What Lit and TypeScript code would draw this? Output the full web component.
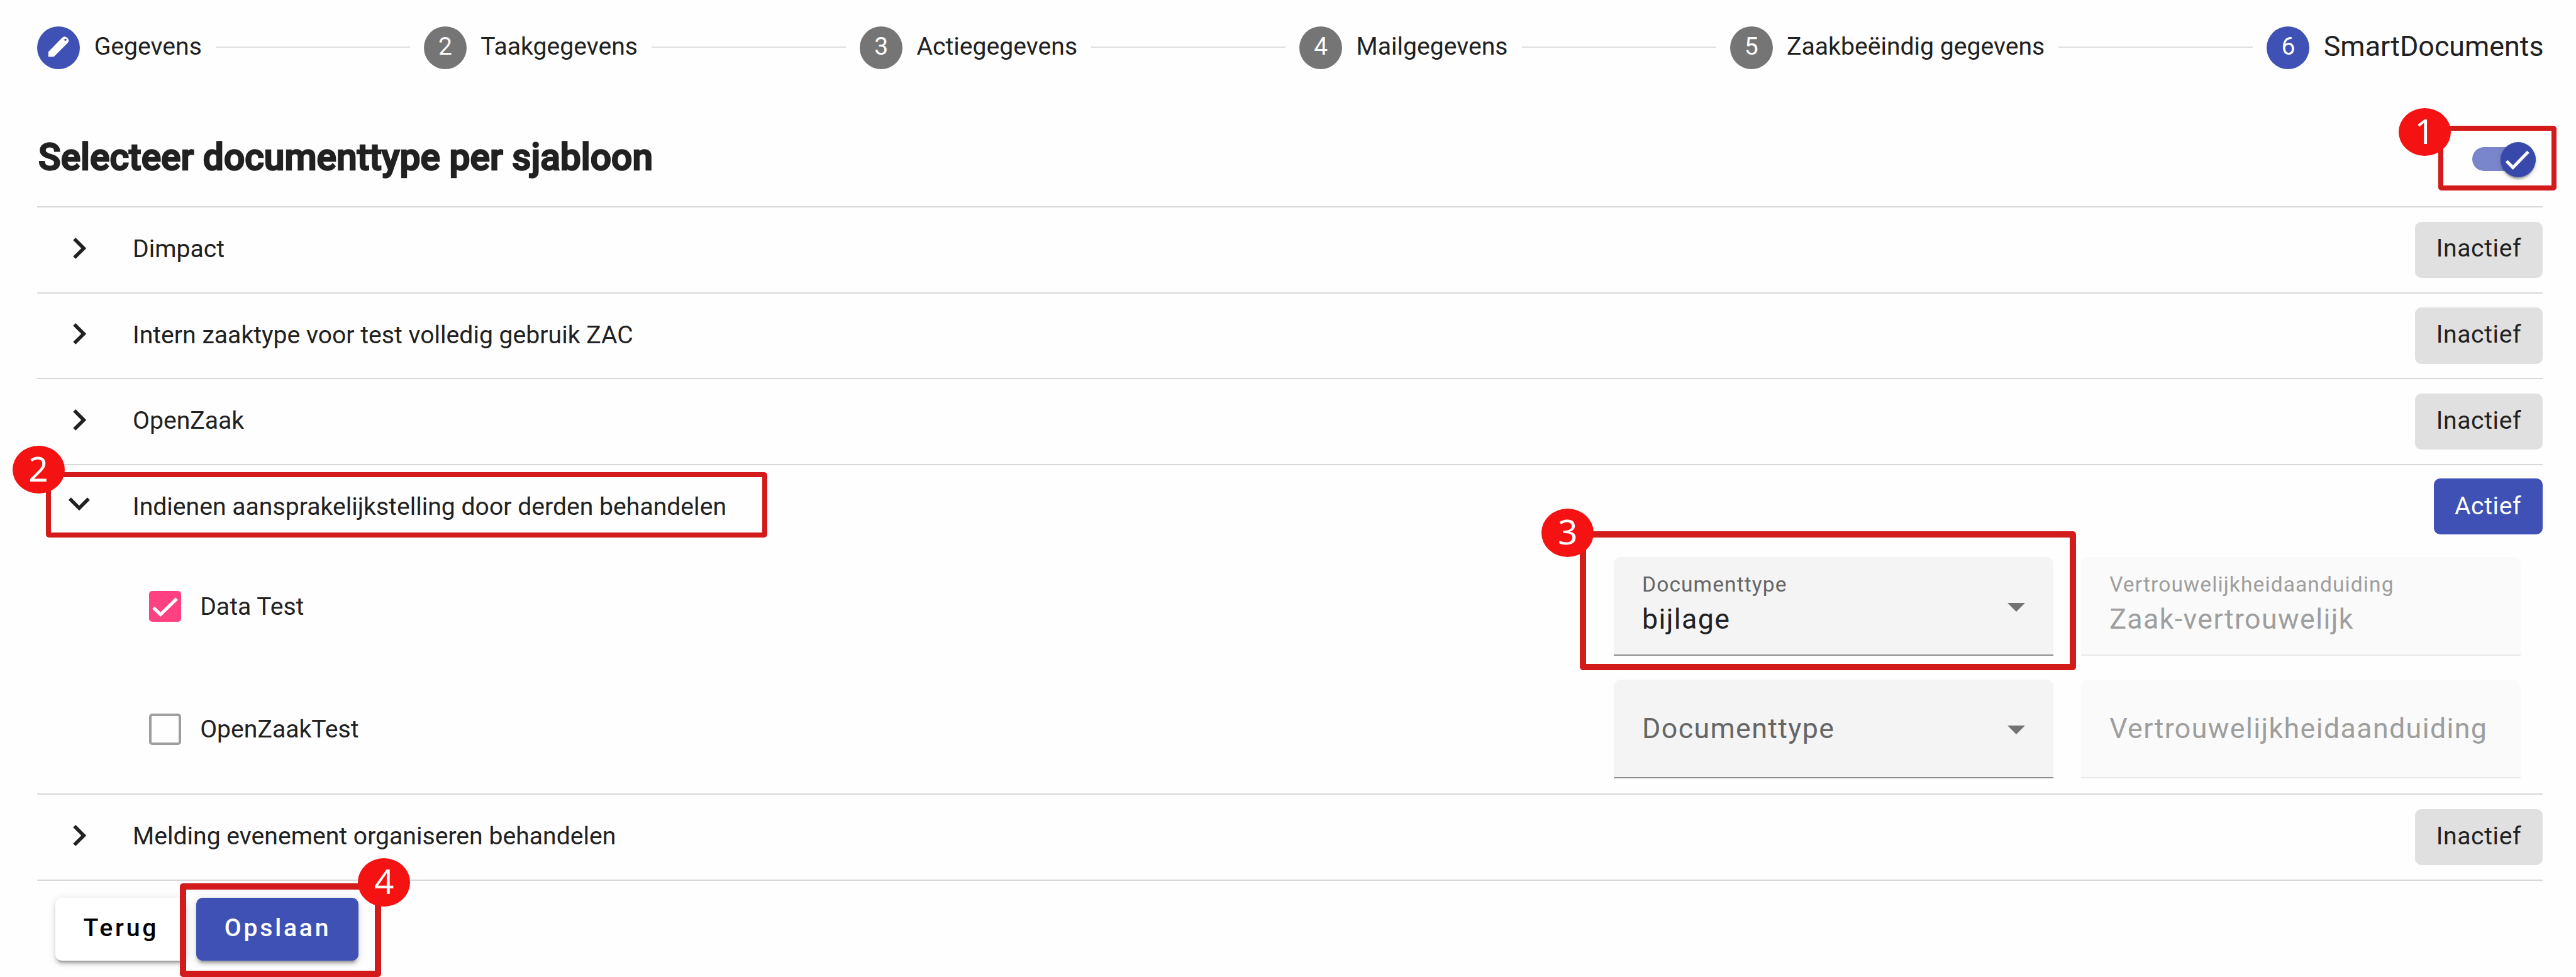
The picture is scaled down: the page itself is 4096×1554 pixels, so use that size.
import { LitElement, html, svg, css } from "lit";
import { customElement, property, state } from "lit/decorators.js";
import { classMap } from "lit/directives/class-map.js";
import { styleMap } from "lit/directives/style-map.js";

interface Template {
  name: string;
  checked: boolean;
  documentType?: string;
  confidentiality?: string;
}

interface Group {
  name: string;
  active: boolean;
  expanded: boolean;
  templates: Template[];
}

/* Horizontal wizard header: numbered circles joined by lines. */
@customElement("wizard-stepper")
class WizardStepper extends LitElement {
  static styles = css`
    :host { display: block; }
    .steps { display: flex; align-items: center; height: 68px; margin-right: -2px; }
    .circle {
      flex: none; width: 68px; height: 68px; border-radius: 50%;
      box-sizing: border-box; padding-bottom: 3px;
      display: flex; align-items: center; justify-content: center;
      background: #757575; color: #fff; line-height: 48px;
    }
    .circle.blue { background: #3f51b5; }
    .circle.pen { padding: 0; }
    .circle svg { display: block; width: 68px; height: 68px; }
    .label { flex: none; margin: 0 22px 3px 22.4px; line-height: 48px; white-space: nowrap; }
    .label.current { font-size: 44.8px; margin-right: 0; }
    .line { flex: 1; height: 2px; margin: 0 22px 1px 0; background: #e0e0e0; }
  `;
  @property({ attribute: false }) steps: string[] = [];

  render() {
    const last = this.steps.length - 1;
    return html`<div class="steps">
      ${this.steps.map((label, i) => html`
        <div class=${classMap({ circle: true, blue: i === 0 || i === last, pen: i === 0 })}>
          ${i === 0
            ? html`<svg viewBox="0 0 373 370">
                <path fill="#fff" fill-rule="evenodd" d="M98 263V220L217 98Q240 76 263 98Q286 118 268 141L146 263ZM237 115a10 10 0 1 0 20 0a10 10 0 1 0 -20 0Z"/>
              </svg>`
            : i + 1}
        </div>
        <div class=${classMap({ label: true, current: i === last })}>${label}</div>
        ${i < last ? html`<div class="line"></div>` : null}
      `)}
    </div>`;
  }
}

@customElement("slide-toggle")
class SlideToggle extends LitElement {
  static styles = css`
    :host { display: block; }
    .toggle { display: flex; align-items: center; width: 101px; height: 56px; }
    .track { flex: none; width: 101px; height: 37.6px; margin-bottom: 1.5px; border-radius: 19px; background: #7986cb; }
    .thumb {
      flex: none; width: 56px; height: 56px; margin-left: -56px; border-radius: 50%; background: #3949ab;
      box-shadow: 0 5.5px 3px -3px rgba(0,0,0,.2), 0 2.8px 3px rgba(0,0,0,.14), 0 2.8px 8px rgba(0,0,0,.12);
    }
    svg { display: block; width: 56px; height: 56px; }
  `;
  render() {
    return html`<div class="toggle">
      <div class="track"></div>
      <div class="thumb"><svg viewBox="0 0 56 56"><path d="M9.6 30.3 19.7 40.4 44 15.4" fill="none" stroke="#fff" stroke-width="5"/></svg></div>
    </div>`;
  }
}

@customElement("check-box")
class CheckBox extends LitElement {
  static styles = css`
    :host { display: block; }
    .row { display: flex; align-items: center; gap: 30.2px; line-height: 48px; }
    .box { flex: none; width: 51.3px; height: 49.6px; box-sizing: border-box; border-radius: 5px; border: 4px solid #9e9e9e; }
    .box.on { border: 0; background: #ff4081; }
    svg { display: block; width: 51.3px; height: 49.6px; }
  `;
  @property() label = "";
  @property({ type: Boolean }) checked = false;
  render() {
    return html`<div class="row">
      <div class=${classMap({ box: true, on: this.checked })}>
        ${this.checked
          ? html`<svg viewBox="0 0 282 273"><path d="M38 146 100 206 242 68" fill="none" stroke="#fff" stroke-width="29"/></svg>`
          : null}
      </div>
      <div>${this.label}</div>
    </div>`;
  }
}

/* Filled form field with floating label; the select variant carries an arrow. */
@customElement("form-field")
class FormField extends LitElement {
  static styles = css`
    :host { display: block; }
    .field {
      display: flex; align-items: center; width: 699.3px; height: 157px; box-sizing: border-box;
      padding: 0 45.7px 0 45px; border-radius: 11px 11px 0 0;
      border-bottom: 2px solid #8e8e8e; background: #f4f4f4; color: #212121;
    }
    .text { flex: 1; display: flex; flex-direction: column; font-size: 44.75px; letter-spacing: 1.37px; line-height: 56px; white-space: nowrap; }
    .caption { color: #666; }
    .filled .caption { font-size: 33.6px; letter-spacing: 1.08px; line-height: 46px; margin-top: -8px; }
    .value { margin-top: 4px; }
    .arrow { flex: none; display: block; width: 28px; height: 14px; margin-top: 5px; fill: #737373; }
    .disabled { background: #fafafa; border-bottom-color: #eaeaea; color: #9e9e9e; }
    .disabled .caption { color: #9e9e9e; }
  `;
  @property() label = "";
  @property() value = "";
  @property({ type: Boolean }) disabled = false;
  render() {
    return html`<div class=${classMap({ field: true, disabled: this.disabled, filled: !!this.value })}>
      <div class="text">
        <div class="caption">${this.label}</div>
        ${this.value ? html`<div class="value">${this.value}</div>` : null}
      </div>
      ${this.disabled ? null : html`<svg class="arrow" viewBox="0 0 28 14"><path d="M0 0H28L14 14Z"/></svg>`}
    </div>`;
  }
}

@customElement("template-group")
class TemplateGroup extends LitElement {
  static styles = css`
    :host { display: block; }
    .head { display: flex; align-items: center; height: 136.7px; box-sizing: border-box; border-top: 2px solid #d8d8d8; }
    .chevron { flex: none; display: block; width: 67.8px; height: 67.8px; margin: 0 51.5px 5.6px 32.4px; fill: #212121; }
    .open .chevron { margin-bottom: 12px; }
    .name { flex: 1; line-height: 48px; margin-bottom: 2.4px; }
    .status {
      flex: none; height: 89.2px; box-sizing: border-box; padding: 0 33.4px 4px; border-radius: 10px;
      display: flex; align-items: center; background: #e0e0e0; letter-spacing: .6px; line-height: 48px;
    }
    .status.active { background: #3f51b5; color: #fff; padding-bottom: 2px; }
    .open .status { margin-bottom: 3px; }
    .body { display: flex; flex-direction: column; gap: 38.2px; padding: 11.4px 34.2px 24px 177.4px; }
    .template { display: flex; align-items: center; gap: 43.8px; }
    .template check-box { flex: 1; }
  `;
  @property({ attribute: false }) group!: Group;
  render() {
    const g = this.group;
    return html`
      <div class=${classMap({ head: true, open: g.expanded })}>
        <svg class="chevron" viewBox="0 0 24 24">
          ${g.expanded
            ? svg`<path d="M16.59 8.59 12 13.17 7.41 8.59 6 10l6 6 6-6z"/>`
            : svg`<path d="M10 6 8.59 7.41 13.17 12l-4.58 4.59L10 18l6-6z"/>`}
        </svg>
        <div class="name">${g.name}</div>
        <div class=${classMap({ status: true, active: g.active })}>${g.active ? "Actief" : "Inactief"}</div>
      </div>
      ${g.expanded
        ? html`<div class="body">
            ${g.templates.map((t) => html`
              <div class="template">
                <check-box .label=${t.name} .checked=${t.checked}></check-box>
                <form-field .label=${"Documenttype"} .value=${t.documentType ?? ""}></form-field>
                <form-field .label=${"Vertrouwelijkheidaanduiding"} .value=${t.confidentiality ?? ""} .disabled=${true}></form-field>
              </div>`)}
          </div>`
        : null}
    `;
  }
}

/* Numbered callouts that lie over the form. */
@customElement("call-out")
class CallOut extends LitElement {
  static styles = css`
    .frame { position: absolute; box-sizing: border-box; border: 0 solid #d31b1b; border-radius: 5px; }
    .badge {
      position: absolute; width: 83px; height: 76.5px; box-sizing: border-box; padding-bottom: 4.4px; border-radius: 50%;
      display: flex; align-items: center; justify-content: center;
      background: #f41212; color: #fff; font: 400 55px/60px "Noto Sans", "Open Sans", sans-serif;
    }
  `;
  @property({ attribute: false }) spec!: { n: number; badge: number[]; frame: number[] };
  render() {
    const { n, badge: b, frame: f } = this.spec;
    const frame = { left: `${f[0]}px`, top: `${f[1]}px`, width: `${f[2] - f[0]}px`, height: `${f[3] - f[1]}px`, borderWidth: `${f[4]}px` };
    return html`<div class="frame" style=${styleMap(frame)}></div>
      <div class="badge" style=${styleMap({ left: `${b[0]}px`, top: `${b[1]}px` })}>${n}</div>`;
  }
}

@customElement("app-root")
class AppRoot extends LitElement {
  static styles = css`
    :host {
      display: block; position: relative; width: 4096px; height: 1554px; overflow: hidden; background: #fefefe;
      color: #212121; font: 400 39.15px/48px Roboto, sans-serif;
    }
    .page { padding: 41.5px 53.4px 0 59.3px; }
    .header { display: flex; align-items: center; justify-content: space-between; height: 218.4px; box-sizing: border-box; padding: 62px 10.3px 0 0; }
    h1 { margin: 0; font: 500 58.7px/72px Roboto, sans-serif; -webkit-text-stroke: 2.4px #212121; text-indent: 1.8px; }
    slide-toggle { margin-top: 8px; }
    .list { border-bottom: 2px solid #d8d8d8; }
    .actions { display: flex; gap: 15.6px; padding: 27.2px 0 0 28.3px; }
    .btn {
      height: 99.8px; box-sizing: border-box; padding: 0 43.9px 3.6px 44.9px; border-radius: 10px;
      display: flex; align-items: center; background: #fff; color: #000; font-weight: 500; letter-spacing: 3.8px;
      box-shadow: 0 8.4px 2.8px -5.6px rgba(0,0,0,.2), 0 5.6px 5.6px rgba(0,0,0,.14), 0 2.8px 14px rgba(0,0,0,.12);
    }
    .btn.primary { background: #3f51b5; color: #fff; }
  `;

  @state() private groups: Group[] = [
    { name: "Dimpact", active: false, expanded: false, templates: [] },
    { name: "Intern zaaktype voor test volledig gebruik ZAC", active: false, expanded: false, templates: [] },
    { name: "OpenZaak", active: false, expanded: false, templates: [] },
    {
      name: "Indienen aansprakelijkstelling door derden behandelen", active: true, expanded: true,
      templates: [
        { name: "Data Test", checked: true, documentType: "bijlage", confidentiality: "Zaak-vertrouwelijk" },
        { name: "OpenZaakTest", checked: false },
      ],
    },
    { name: "Melding evenement organiseren behandelen", active: false, expanded: false, templates: [] },
  ];

  private steps = ["Gegevens", "Taakgegevens", "Actiegegevens", "Mailgegevens", "Zaakbeëindig gegevens", "SmartDocuments"];

  /* badge: left, top; frame: left, top, right, bottom, stroke */
  private callouts = [
    { n: 1, badge: [3813.8, 171.7], frame: [3877.3, 199.5, 4065.4, 303.2, 8] },
    { n: 2, badge: [19.6, 708.5], frame: [73, 751, 1220.3, 854.8, 8.3] },
    { n: 3, badge: [2451.2, 809], frame: [2511.8, 845, 3301.4, 1065.9, 10] },
    { n: 4, badge: [569.2, 1365], frame: [286.2, 1404.8, 605.8, 1554, 10] },
  ];

  render() {
    return html`
      <div class="page">
        <wizard-stepper .steps=${this.steps}></wizard-stepper>
        <div class="header">
          <h1>Selecteer documenttype per sjabloon</h1>
          <slide-toggle></slide-toggle>
        </div>
        <div class="list">
          ${this.groups.map((g) => html`<template-group .group=${g}></template-group>`)}
        </div>
        <div class="actions">
          <div class="btn">Terug</div>
          <div class="btn primary">Opslaan</div>
        </div>
      </div>
      ${this.callouts.map((c) => html`<call-out .spec=${c}></call-out>`)}
    `;
  }
}
